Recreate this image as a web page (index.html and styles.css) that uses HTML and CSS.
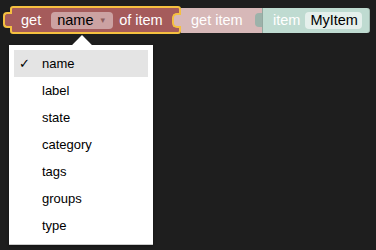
FILE: index.html
```html
<!DOCTYPE html>
<html>
<head>
  <title>Blocks</title>
  <link rel="stylesheet" href="styles.css">
</head>
<body>
  <div class="workspace">
    <div class="block-row">
      <div class="block block-get selected">
        <span class="tab-left"></span>
        <span class="label">get</span>
        <span class="field field-drop">name <span class="caret">&#9662;</span></span>
        <span class="label">of item</span>
        <span class="slot"></span>
      </div>
      <div class="block block-item">
        <span class="label">get item</span>
      </div>
      <div class="block block-name">
        <span class="tab-green"></span>
        <span class="label">item</span>
        <span class="field field-text">MyItem</span>
      </div>
    </div>

    <div class="menu">
      <span class="menu-arrow"></span>
      <div class="menu-item active"><span class="check">&#10003;</span>name</div>
      <div class="menu-item">label</div>
      <div class="menu-item">state</div>
      <div class="menu-item">category</div>
      <div class="menu-item">tags</div>
      <div class="menu-item">groups</div>
      <div class="menu-item">type</div>
    </div>
  </div>
</body>
</html>
```

FILE: styles.css
```css
body {
  margin: 0;
  background-color: #1e1e1e;
  font-family: "Liberation Sans", Arial, sans-serif;
}

.workspace {
  position: relative;
  width: 376px;
  height: 250px;
  overflow: hidden;
}

.block-row {
  display: flex;
  align-items: center;
  padding: 6px 0 0 10px;
}

.block {
  position: relative;
  display: flex;
  align-items: center;
  box-sizing: border-box;
  color: #fff;
  font-size: 14.5px;
}

.block-get {
  width: 171px;
  height: 28px;
  padding-left: 9px;
  gap: 5px;
  background-color: #a55b5b;
  border: 2px solid #f5c040;
  border-radius: 3px;
  z-index: 2;
}

.block-get .label + .field {
  margin-left: 5px;
}

.tab-left {
  position: absolute;
  left: -9px;
  top: 4px;
  width: 7px;
  height: 12px;
  background-color: #a55b5b;
  border: 2px solid #f5c040;
  border-right: none;
  border-radius: 4px 0 0 4px;
}

.slot {
  position: absolute;
  right: -2px;
  top: 5px;
  width: 7px;
  height: 11px;
  background-color: #d7b8b8;
  border: 2px solid #f5c040;
  border-right: none;
  border-radius: 5px 0 0 5px;
}

.field {
  display: flex;
  align-items: center;
  height: 17px;
  border-radius: 4px;
  color: #000;
  padding: 0 6px;
}

.field-drop {
  width: 62px;
  box-sizing: border-box;
  background-color: #cca2a2;
  gap: 7px;
  margin-right: 1px;
}

.caret {
  font-size: 9px;
  color: #8d5e5e;
  font-family: "DejaVu Sans", sans-serif;
}

.block-item {
  width: 81px;
  height: 25px;
  padding-left: 10px;
  background-color: #d7b8b8;
}

.block-name {
  width: 108px;
  height: 25px;
  padding-left: 10px;
  gap: 5px;
  background-color: #bfdbd1;
  border-left: 1px solid #94a9a1;
  border-right: 1px solid #9fb5ad;
  border-radius: 0 3px 3px 0;
}

.tab-green {
  position: absolute;
  left: -8px;
  top: 5px;
  width: 7px;
  height: 14px;
  background-color: #9cb2aa;
  border-radius: 4px 0 0 4px;
}

.field-text {
  background-color: #e5f0ec;
  width: 57px;
  box-sizing: border-box;
  padding-left: 5px;
}

.menu {
  position: absolute;
  left: 9px;
  top: 45px;
  width: 144px;
  box-sizing: border-box;
  padding: 5px;
  background-color: #fff;
  border-bottom: 1px solid #ccc;
  box-shadow: 0 1px 3px rgba(0, 0, 0, 0.4);
  font-size: 13px;
  color: #000;
}

.menu-arrow {
  position: absolute;
  left: 66px;
  top: -7px;
  width: 14px;
  height: 14px;
  background-color: #fff;
  transform: rotate(45deg);
}

.menu-item {
  position: relative;
  height: 27px;
  line-height: 27px;
  padding-left: 28px;
}

.menu-item.active {
  background-color: #e4e4e4;
}

.check {
  position: absolute;
  left: 5px;
  font-family: "DejaVu Sans", sans-serif;
  font-size: 13px;
}
```
